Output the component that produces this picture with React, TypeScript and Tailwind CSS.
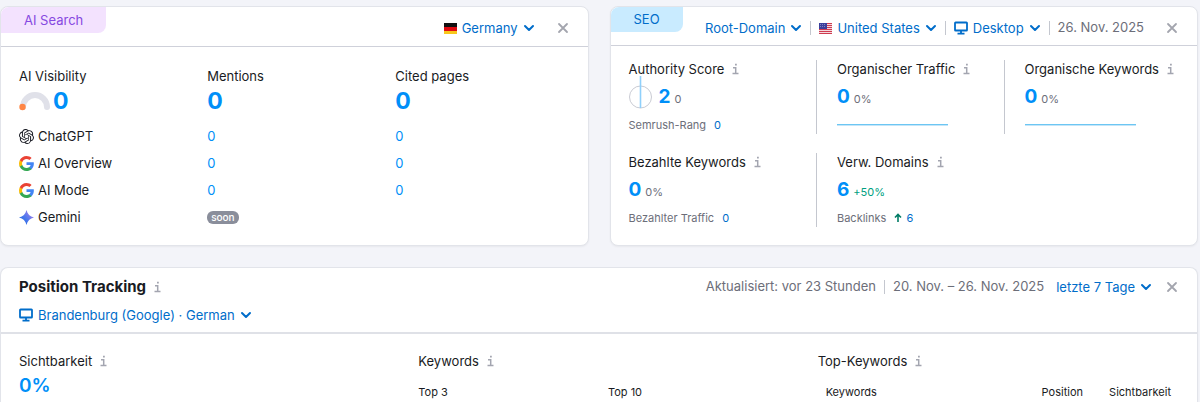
import { useState } from 'react'
import type { ReactNode } from 'react'
import { SiOpenai } from 'react-icons/si'

interface Engine {
  name: string
  icon: ReactNode
  mentions: number | null
  pages?: number
}

function GoogleIcon() {
  return (
    <svg viewBox="0 0 48 48" className="w-[15px] h-[15px]" aria-hidden="true">
      <path fill="#4285F4" d="M47.500 24.500c0-1.600-.1-3.200-.4-4.700H24v9h13.200c-.6 3-2.300 5.500-4.900 7.200v6h7.900c4.600-4.200 7.300-10.500 7.300-17.500z" />
      <path fill="#34A853" d="M24 48c6.500 0 12-2.100 16.200-5.900l-7.900-6.100c-2.200 1.500-5 2.300-8.300 2.300-6.300 0-11.600-4.200-13.500-9.900H2.400v6.200C6.500 42.600 14.600 48 24 48z" />
      <path fill="#FBBC05" d="M10.500 28.600c-1-3-1-6.200 0-9.200v-6.200H2.400c-3.200 6.800-3.200 14.800 0 21.500l8.100-6.100z" />
      <path fill="#EA4335" d="M24 9.500c3.500 0 6.800 1.200 9.300 3.600l6.900-6.900C35.900 2.200 30.500 0 24 0 14.600 0 6.500 5.400 2.400 13.200l8.100 6.200C12.400 13.700 17.700 9.500 24 9.500z" />
    </svg>
  )
}

function GeminiIcon() {
  return (
    <svg viewBox="0 0 24 24" className="w-[15px] h-[15px]" aria-hidden="true">
      <defs>
        <linearGradient id="gemini" x1="2" y1="20" x2="20" y2="3" gradientUnits="userSpaceOnUse">
          <stop offset="0" stopColor="#1c69e0" />
          <stop offset="0.5" stopColor="#5279ee" />
          <stop offset="1" stopColor="#a37ee8" />
        </linearGradient>
      </defs>
      <path fill="url(#gemini)" d="M12 0c1.500 6.500 5.500 10.500 12 12-6.500 1.500-10.500 5.500-12 12-1.500-6.500-5.500-10.500-12-12C6.500 10.500 10.500 6.500 12 0z" />
    </svg>
  )
}

function InfoIcon() {
  return (
    <svg viewBox="0 0 8 12" className="w-2 h-3 shrink-0 text-[#a3a5b0]" fill="none" stroke="currentColor" strokeWidth="1.500" aria-hidden="true">
      <path d="M1 4.700h2.700v6M0.500 10.500h6" />
      <path d="M3 1.700h1.800" strokeWidth="1.800" />
    </svg>
  )
}

function ChevronIcon() {
  return (
    <svg viewBox="0 0 12 8" className="w-3 h-2 shrink-0" fill="none" stroke="currentColor" strokeWidth="2" strokeLinecap="round" strokeLinejoin="round" aria-hidden="true">
      <path d="M2 2l4 4 4-4" />
    </svg>
  )
}

function MonitorIcon() {
  return (
    <svg viewBox="0 0 14 14" className="w-3.5 h-3.5 shrink-0" fill="none" stroke="currentColor" strokeWidth="1.800" aria-hidden="true">
      <rect x="1" y="1.500" width="12" height="8" rx="0.600" />
      <path d="M7 9.500v2.500M3.500 12.700h7" />
    </svg>
  )
}

function GermanyFlag() {
  return (
    <svg viewBox="0 0 13 11" className="w-[13px] h-[11px] shrink-0" aria-hidden="true">
      <rect width="13" height="4" fill="#111" />
      <rect y="4" width="13" height="4" fill="#e00b12" />
      <rect y="8" width="13" height="3" fill="#f8c71c" />
    </svg>
  )
}

function UsFlag() {
  return (
    <svg viewBox="0 0 13 11" className="w-[13px] h-[11px] shrink-0" aria-hidden="true">
      <rect width="13" height="11" fill="#f3d9de" />
      <path d="M0 .5h13M0 2.500h13M0 4.500h13M0 6.500h13M0 8.500h13M0 10.500h13" stroke="#cf3b50" />
      <rect width="8" height="6" fill="#3b3f9b" />
      <path d="M1 1.500h6M1 3.500h6" stroke="#9da0d0" strokeWidth="0.700" strokeDasharray="1 1" />
    </svg>
  )
}

function CloseButton({ label }: { label: string }) {
  return (
    <button type="button" aria-label={label} className="flex p-0.5 text-[#a3a5ae]">
      <svg viewBox="0 0 12 12" className="w-3 h-3" fill="none" stroke="currentColor" strokeWidth="1.800" strokeLinecap="round" aria-hidden="true">
        <path d="M2 2l8 8M10 2l-8 8" />
      </svg>
    </button>
  )
}

function Dropdown({ label, options, icon }: { label: string; options: string[]; icon?: ReactNode }) {
  const [value, setValue] = useState(options[0])

  return (
    <label className="flex items-center gap-[5px] text-[#006dca]">
      {icon}
      <select
        aria-label={label}
        value={value}
        onChange={e => setValue(e.target.value)}
        className="appearance-none field-sizing-content bg-transparent leading-5"
      >
        {options.map(o => <option key={o}>{o}</option>)}
      </select>
      <ChevronIcon />
    </label>
  )
}

function Divider() {
  return <div className="w-px h-3.5 bg-[#c4c7cf]" />
}

function Metric({ title, value, change, positive, chart, className = '', children }: {
  title: string
  value: number
  change: string
  positive?: boolean
  chart?: ReactNode
  className?: string
  children: ReactNode
}) {
  return (
    <div className={`h-[74px] ${className}`}>
      <h3 className="flex items-center gap-2 leading-[18px] whitespace-nowrap">{title} <InfoIcon /></h3>
      <div className="flex items-center mt-[5px] h-7">
        {chart}
        <div className="flex items-baseline gap-1">
          <a href="#" className="text-[19px] leading-7 font-bold text-[#008ff8]">{value}</a>
          <span className={`text-[11px] ${positive ? 'text-[#009f81]' : 'text-[#6c6e79]'}`}>{change}</span>
        </div>
      </div>
      <div className="flex items-center gap-2 mt-1.5 h-4 text-[11px] text-[#6c6e79]">{children}</div>
    </div>
  )
}

function Sparkline() {
  return (
    <svg viewBox="0 0 111 4" className="w-[111px] h-1" aria-hidden="true">
      <path d="M0 1.500h111" stroke="#6cc6f3" />
      <path d="M0 2.500h111" stroke="#c4e5f8" />
    </svg>
  )
}

const engines: Engine[] = [
  { name: 'ChatGPT', icon: <SiOpenai className="w-[15px] h-[15px]" />, mentions: 0, pages: 0 },
  { name: 'AI Overview', icon: <GoogleIcon />, mentions: 0, pages: 0 },
  { name: 'AI Mode', icon: <GoogleIcon />, mentions: 0, pages: 0 },
  { name: 'Gemini', icon: <GeminiIcon />, mentions: null },
]

const card = 'bg-white border border-[#e2e4ea] shadow-xs'

function AiSearch() {
  return (
    <section className={`${card} rounded-lg`}>
      <header className="flex items-start justify-between h-10 border-b border-[#cfd1da]">
        <h2 className="px-[23px] h-[26px] leading-[26px] rounded-tl-lg rounded-br-lg bg-[#f3e2fe] text-[#8649e1]">AI Search</h2>
        <div className="flex items-center gap-5 h-[42px] pr-[17px]">
          <Dropdown label="Land" options={['Germany', 'United States']} icon={<GermanyFlag />} />
          <CloseButton label="AI Search schließen" />
        </div>
      </header>
      <div className="pt-[19px] pr-[22px]">
        <table className="w-full table-fixed text-left">
          <thead>
            <tr>
              {['AI Visibility', 'Mentions', 'Cited pages'].map((title, i) => (
                <th key={title} scope="col" className="pl-[18px] pb-[7px] font-normal">
                  <div className="leading-5">{title}</div>
                  <div className="flex items-center gap-0.5 h-[30px]">
                    {i === 0 && (
                      <svg viewBox="0 0 32 20" className="w-8 h-5" fill="none" aria-hidden="true">
                        <path d="M4 16a12 12 0 0 1 24 0" stroke="#e0e1e9" strokeWidth="6" strokeLinecap="round" />
                        <circle cx="3.500" cy="16" r="3.200" fill="#ff8645" />
                      </svg>
                    )}
                    <a href="#" className="text-[23px] leading-7 font-bold text-[#008ff8]">0</a>
                  </div>
                </th>
              ))}
            </tr>
          </thead>
          <tbody>
            {engines.map(e => (
              <tr key={e.name} className="h-[27px]">
                <th scope="row" className="pl-[18px] font-normal">
                  <span className="flex items-center gap-1">{e.icon} {e.name}</span>
                </th>
                <td className="pl-[18px]">
                  {e.mentions !== null
                    ? <a href="#" className="text-[#008ff8]">{e.mentions}</a>
                    : <span className="block w-fit px-1 rounded-md bg-[#8a8e9b] text-white text-[10px] leading-[13px] font-medium">soon</span>}
                </td>
                <td className="pl-[18px]">
                  {e.pages !== undefined && <a href="#" className="text-[#008ff8]">{e.pages}</a>}
                </td>
              </tr>
            ))}
          </tbody>
        </table>
      </div>
    </section>
  )
}

function Seo() {
  return (
    <section className={`${card} rounded-lg`}>
      <header className="flex items-start justify-between h-[39px] border-b border-[#cfd1da]">
        <h2 className="px-[23px] h-[25px] leading-[25px] rounded-tl-lg rounded-br-lg bg-[#c9ebff] text-[#006dca]">SEO</h2>
        <div className="flex items-center gap-2 h-[42px] pr-[17px] whitespace-nowrap">
          <Dropdown label="Bereich" options={['Root-Domain', 'Subdomain']} />
          <Divider />
          <Dropdown label="Land" options={['United States', 'Germany']} icon={<UsFlag />} />
          <Divider />
          <Dropdown label="Gerät" options={['Desktop', 'Mobil']} icon={<MonitorIcon />} />
          <Divider />
          <span className="mr-3 text-[#6c6e79]">26. Nov. 2025</span>
          <CloseButton label="SEO schließen" />
        </div>
      </header>
      <div className="grid grid-cols-3 gap-y-[19px] pl-[18px] pr-1.5 pt-[14px] pb-[18px]">
        <Metric
          title="Authority Score"
          value={2}
          change="0"
          chart={
            <svg viewBox="0 0 24 34" className="w-6 h-[34px] mr-1.5 mb-2.5 shrink-0" fill="none" aria-hidden="true">
              <circle cx="11.500" cy="22" r="11" stroke="#c9cbd3" />
              <path d="M11.500 1v32" stroke="#8fd0fb" strokeWidth="1.600" />
            </svg>
          }
        >
          Semrush-Rang <a href="#" className="text-[#006dca]">0</a>
        </Metric>
        <Metric title="Organischer Traffic" value={0} change="0%" className="border-l border-[#c4c7cf] pl-5">
          <Sparkline />
        </Metric>
        <Metric title="Organische Keywords" value={0} change="0%" className="border-l border-[#c4c7cf] pl-5">
          <Sparkline />
        </Metric>
        <Metric title="Bezahlte Keywords" value={0} change="0%">
          Bezahlter Traffic <a href="#" className="text-[#006dca]">0</a>
        </Metric>
        <Metric title="Verw. Domains" value={6} change="+50%" positive className="border-l border-[#c4c7cf] pl-5">
          Backlinks
          <span className="flex items-center gap-1">
            <svg viewBox="0 0 8 10" className="w-2 h-2.5" fill="none" stroke="#007c65" strokeWidth="1.600" aria-hidden="true">
              <path d="M4 9V1.500M1 4.500l3-3 3 3" />
            </svg>
            <a href="#" className="text-[#006dca]">6</a>
          </span>
        </Metric>
      </div>
    </section>
  )
}

function PositionTracking() {
  return (
    <section className={`${card} border-b-0 rounded-t-lg flex-1 mt-[21px]`}>
      <header className="h-[66px] pl-[18px] pr-[17px] pt-[7px] border-b-2 border-[#dfe1e7]">
        <div className="flex items-center justify-between">
          <h2 className="flex items-center gap-2 text-[15px] leading-6 font-bold">Position Tracking <InfoIcon /></h2>
          <div className="flex items-center gap-2 text-[#6c6e79]">
            <span>Aktualisiert: vor 23 Stunden</span>
            <Divider />
            <span className="mr-1">20. Nov. – 26. Nov. 2025</span>
            <Dropdown label="Zeitraum" options={['letzte 7 Tage', 'letzte 30 Tage']} />
            <span className="pl-1"><CloseButton label="Position Tracking schließen" /></span>
          </div>
        </div>
        <div className="flex mt-1.5">
          <Dropdown
            label="Kampagne"
            options={['Brandenburg (Google) · German']}
            icon={<MonitorIcon />}
          />
        </div>
      </header>
      <div className="grid grid-cols-3 gap-[38px] px-[18px] pt-[17px]">
        <div>
          <h3 className="flex items-center gap-2 leading-5">Sichtbarkeit <InfoIcon /></h3>
          <a href="#" className="text-[19px] leading-[30px] font-semibold text-[#008ff8]">0%</a>
        </div>
        <div>
          <h3 className="flex items-center gap-2 leading-5">Keywords <InfoIcon /></h3>
          <div className="grid grid-cols-2 gap-[18px] mt-[13px] text-[11px] leading-4">
            <span>Top 3</span>
            <span>Top 10</span>
          </div>
        </div>
        <div>
          <h3 className="flex items-center gap-2 leading-5">Top-Keywords <InfoIcon /></h3>
          <table className="w-full mt-[13px] text-[11px] leading-4">
            <thead>
              <tr>
                <th scope="col" className="pl-2 text-left font-normal">Keywords</th>
                <th scope="col" className="text-right font-normal">Position</th>
                <th scope="col" className="w-24 pr-2 text-right font-normal">Sichtbarkeit</th>
              </tr>
            </thead>
          </table>
        </div>
      </div>
    </section>
  )
}

export default function App() {
  return (
    <main className="flex flex-col min-h-screen pt-1.5 pr-[2px] bg-[#f3f4f9] font-['Inter',sans-serif] text-[13px] text-[#191b23]">
      <div className="grid grid-cols-2 gap-[21px]">
        <AiSearch />
        <Seo />
      </div>
      <PositionTracking />
    </main>
  )
}
